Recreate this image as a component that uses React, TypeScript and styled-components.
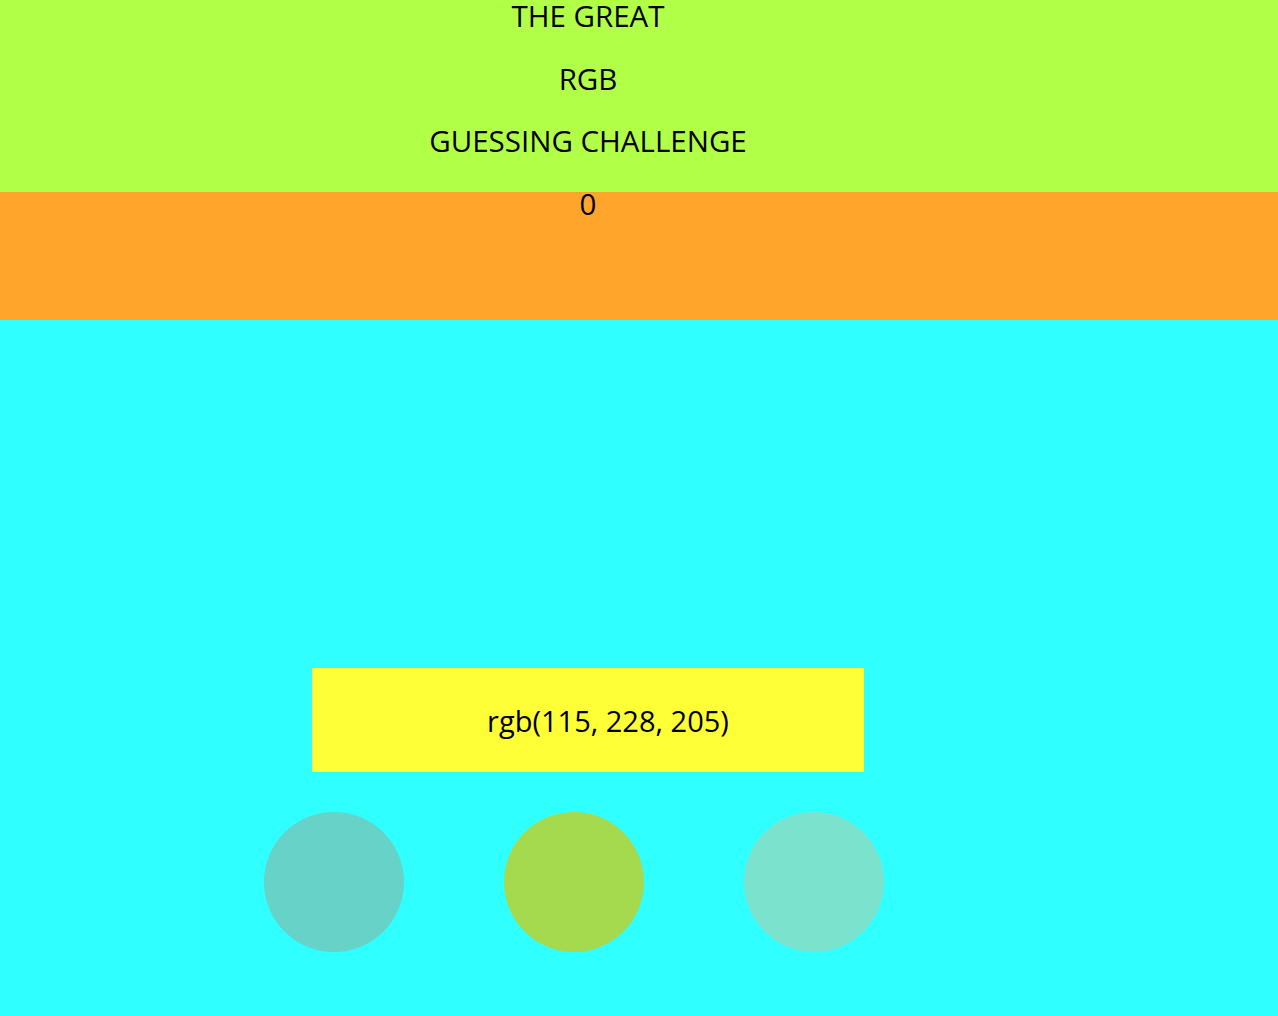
import styled, { createGlobalStyle } from "styled-components";

const GlobalStyle = createGlobalStyle`
  html, body {
    margin: 0;
    padding: 0;
    background: #2fffff;
    font-family: "Open Sans", "Noto Sans", sans-serif;
    color: #000;
  }
`;

const Page = styled.div`
  display: flex;
  flex-direction: column;
  min-height: 1016px;
  overflow: hidden;
`;

const Header = styled.header`
  height: 192px;
  background: #b2ff47;
  position: relative;
  z-index: 1;
`;

const TitleColumn = styled.div`
  width: 1176px;
  margin-top: -15px;
  display: flex;
  flex-direction: column;
  align-items: center;
`;

const TitleLine = styled.div`
  height: 62.7px;
  line-height: 62px;
  font-size: 29.5px;
`;

const ScoreBar = styled.section`
  height: 128px;
  background: #ffa52c;
`;

const Board = styled.main`
  flex: 1;
  background: #2fffff;
  display: flex;
  flex-direction: column;
  padding-top: 348px;
`;

const Target = styled.div`
  width: 552px;
  height: 104px;
  margin-left: 312px;
  padding-left: 40px;
  box-sizing: border-box;
  background: #ffff38;
  display: flex;
  align-items: center;
  justify-content: center;
  font-size: 29px;
`;

const Choices = styled.div`
  display: flex;
  gap: 100px;
  padding-left: 264px;
  margin-top: 40px;
`;

const Choice = styled.div<{ $color: string }>`
  width: 140px;
  height: 140px;
  border-radius: 50%;
  background: ${(p) => p.$color};
`;

const choices = ["rgb(103, 210, 199)", "rgb(166, 218, 78)", "rgb(122, 226, 205)"];

const App = () => (
  <Page>
    <GlobalStyle />
    <Header>
      <TitleColumn>
        <TitleLine>THE GREAT</TitleLine>
        <TitleLine>RGB</TitleLine>
        <TitleLine>GUESSING CHALLENGE</TitleLine>
        <TitleLine>0</TitleLine>
      </TitleColumn>
    </Header>
    <ScoreBar />
    <Board>
      <Target>rgb(115, 228, 205)</Target>
      <Choices>
        {choices.map((c) => (
          <Choice key={c} $color={c} />
        ))}
      </Choices>
    </Board>
  </Page>
);

export default App;
